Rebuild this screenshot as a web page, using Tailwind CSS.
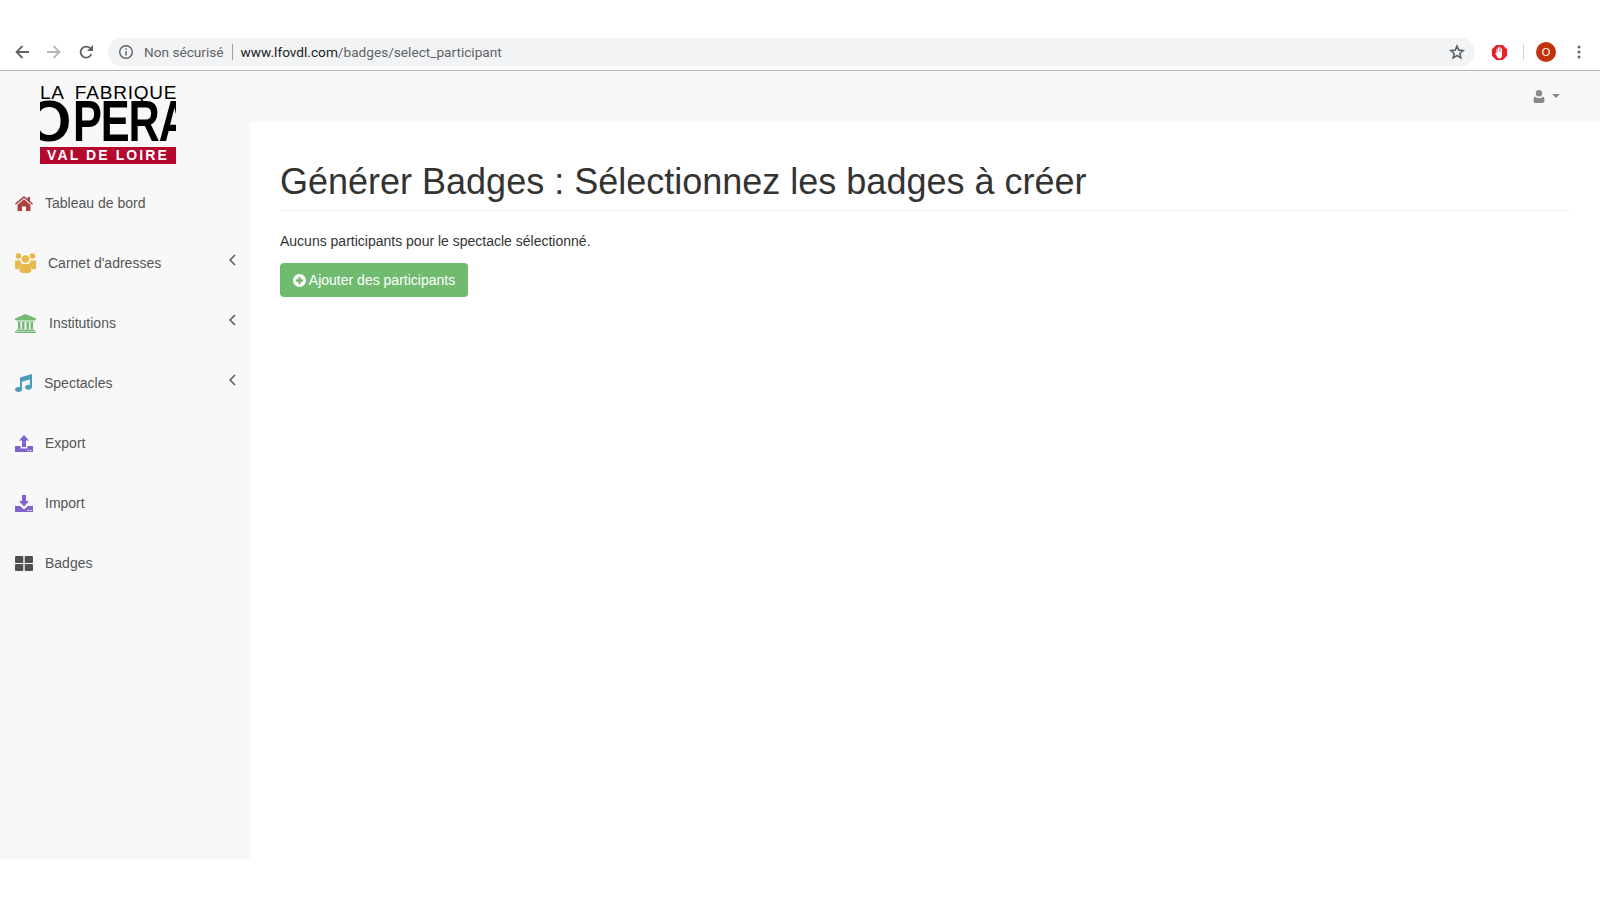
<!DOCTYPE html>
<html lang="fr">
<head>
<meta charset="utf-8">
<title>Générer Badges</title>
<script src="https://cdn.jsdelivr.net/npm/@tailwindcss/browser@4"></script>
</head>
<body class="bg-white font-['Liberation_Sans',Arial,sans-serif] w-[1600px] h-[900px] overflow-hidden">
<header class="h-[71px] border-b border-[#b8b8b8] bg-white flex items-end pb-[4px]">
  <div class="w-[108px] h-[28px] flex items-center pl-[15px] gap-[18px]">
    <svg class="w-[14px] h-[14px]" viewBox="0 0 14 14" fill="none" stroke="#5f6368" stroke-width="1.800"><path d="M14 7H1.500M7.500 1 1.500 7l6 6"/></svg>
    <svg class="w-[14px] h-[14px]" viewBox="0 0 14 14" fill="none" stroke="#b5b7ba" stroke-width="1.800"><path d="M0 7h12.500M6.500 1l6 6-6 6"/></svg>
    <svg class="w-[14px] h-[14px]" viewBox="0 0 14 14" fill="none" stroke="#5f6368" stroke-width="1.800"><path d="M12.300 9A5.500 5.500 0 1 1 11 3.200"/><path d="M14 0v6H8z" fill="#5f6368" stroke="none"/></svg>
  </div>
  <div class="w-[1367px] h-[28px] rounded-full bg-[#f1f3f4] flex items-center pl-[10px] pr-[10px] text-[13.650px] text-[#5f6368] font-['Roboto','Liberation_Sans',sans-serif]">
    <svg class="w-[16px] h-[16px] mr-[10px]" viewBox="0 0 16 16" fill="none" stroke="#5f6368" stroke-width="1.400"><circle cx="8" cy="8" r="6.300"/><path d="M8 7v4.500M8 4.300v1.500"/></svg>
    <span>Non sécurisé</span>
    <span class="w-px h-[16px] bg-[#9aa0a6] mx-[8px]"></span>
    <span><span class="text-[#202124]">www.lfovdl.com</span>/badges/select_participant</span>
    <svg class="w-[16px] h-[16px] ml-auto" viewBox="0 0 18 18" fill="none" stroke="#5f6368" stroke-width="1.800"><path d="m9 2.300 2 4.600 5 .5-3.800 3.300 1.100 4.900L9 13l-4.300 2.600 1.100-4.900L2 7.400l5-.5z"/></svg>
  </div>
  <div class="flex-1 h-[28px] flex items-center relative">
    <svg class="w-[17px] h-[17px] ml-[16px]" viewBox="0 0 18 18"><path d="M5.500 1h7L17 5.500v7L12.500 17h-7L1 12.500v-7z" fill="#e8202a"/><path d="M5.800 9V5h1.100v3.500h.5V3.500h1.200v5h.4V3.300h1.200v5.200h.4V4.800h1.100V12c0 2.200-1 3.300-2.700 3.300-1.500 0-2.300-.8-2.800-2.200L4.500 9.800z" fill="#fff"/></svg>
    <span class="w-px h-[16px] bg-[#d3d5d7] ml-[15px]"></span>
    <span class="w-[20px] h-[20px] rounded-full bg-[#c1330c] text-white text-[11px] flex items-center justify-center ml-[12px]">O</span>
    <svg class="w-[4px] h-[14px] ml-[21px]" viewBox="0 0 4 14" fill="#5f6368"><circle cx="2" cy="2" r="1.500"/><circle cx="2" cy="7" r="1.500"/><circle cx="2" cy="12" r="1.500"/></svg>
  </div>
</header>
<div class="flex h-[788px] bg-[#f8f8f8]">
  <aside class="w-[250px] shrink-0 bg-[#f8f8f8]">
    <div class="h-[102px] pl-[40px] pt-[15px]">
      <div class="w-[136px] h-[78px] overflow-hidden relative text-black">
        <div class="absolute left-[-13px] top-[9px] whitespace-nowrap text-[57px] leading-[52px] font-bold"><span class="inline-block">O</span><span class="inline-block ml-[2px] tracking-[-1.500px] origin-left scale-x-[0.76]">PERA</span></div>
        <div class="absolute left-0 top-[-4px] whitespace-nowrap text-[19px] leading-[22px] tracking-[0.800px] [word-spacing:5px]">LA FABRIQUE</div>
        <div class="absolute left-0 right-0 bottom-0 h-[17px] bg-[#b5082e] text-white text-[14px] font-bold tracking-[2.100px] leading-[17px] text-center">VAL DE LOIRE</div>
      </div>
    </div>
    <nav class="text-[14px] text-[#555555]">
      <a class="h-[60px] flex items-center pl-[15px]">
        <svg class="w-[18px] h-[15px] mr-[12px]" viewBox="0 0 18 15"><path d="M9 0 0 7.500l1 1.200L9 2l8 6.700 1-1.200-3-2.500V1h-2.500v2z" fill="#a94442"/><path d="M9 3.300 2.500 8.800V15h4.500v-4.500h4V15h4.500V8.800z" fill="#a94442"/></svg>
        <span>Tableau de bord</span>
      </a>
      <a class="h-[60px] flex items-center pl-[15px] relative">
        <svg class="w-[21px] h-[20px] mr-[12px]" viewBox="0 0 21 20" fill="#e5b94b"><circle cx="3.500" cy="3" r="2.800"/><circle cx="17.500" cy="3" r="2.800"/><circle cx="10.500" cy="6" r="3.800"/><path d="M0 7.500h5.300c.5 2 1.200 3 2.200 3.700-2 1-3.500 3-3.500 5H1.500C.5 16.200 0 15.500 0 14.500zM21 7.500h-5.300c-.5 2-1.200 3-2.200 3.700 2 1 3.500 3 3.500 5h2.500c1 0 1.500-.7 1.500-1.700z"/><path d="M7.500 11h6c2 1 3 2.500 3 5.500 0 2-1 3.500-3 3.500h-6c-2 0-3-1.500-3-3.500 0-3 1-4.500 3-5.500z"/></svg>
        <span>Carnet d'adresses</span>
        <svg class="absolute left-[229px] top-[21px] w-[7px] h-[12px]" viewBox="0 0 7 12" fill="none" stroke="#555" stroke-width="1.500"><path d="M6 1 1 6l5 5"/></svg>
      </a>
      <a class="h-[60px] flex items-center pl-[15px] relative">
        <svg class="w-[21px] h-[19px] mr-[13px]" viewBox="0 0 21 19" fill="#74b974"><path d="M10.500 0 21 4.500V6H0V4.500z"/><path d="M1.500 6.500h18v1h-18zM3 8h2.500v7H3zM7 8h2.500v7H7zM11.500 8H14v7h-2.500zM15.500 8H18v7h-2.500zM1.500 15.500h18V17h-18zM0 17.500h21V19H0z"/></svg>
        <span>Institutions</span>
        <svg class="absolute left-[229px] top-[21px] w-[7px] h-[12px]" viewBox="0 0 7 12" fill="none" stroke="#555" stroke-width="1.500"><path d="M6 1 1 6l5 5"/></svg>
      </a>
      <a class="h-[60px] flex items-center pl-[15px] relative">
        <svg class="w-[17px] h-[18px] mr-[12px]" viewBox="0 0 17 18" fill="#4b9cbb"><path d="M5 3.500 17 0v13c0 1.500-1.500 2.700-3.500 2.700S10 14.500 10 13.200s1.500-2.500 3.500-2.500c.5 0 1 .1 1.400.3V5.500L7 7.800V15.500c0 1.400-1.500 2.500-3.500 2.500S0 16.900 0 15.600s1.500-2.500 3.500-2.500c.6 0 1 .1 1.500.3z"/></svg>
        <span>Spectacles</span>
        <svg class="absolute left-[229px] top-[21px] w-[7px] h-[12px]" viewBox="0 0 7 12" fill="none" stroke="#555" stroke-width="1.500"><path d="M6 1 1 6l5 5"/></svg>
      </a>
      <a class="h-[60px] flex items-center pl-[15px]">
        <svg class="w-[18px] h-[17px] mr-[12px]" viewBox="0 0 18 17"><path d="M9 0l5 5.500h-3V12H7V5.500H4z" fill="#7f62cc"/><path d="M0 11h5.500v2.500h7V11H18v6H0z" fill="#7f62cc"/><path d="M12.500 15h1.500v1h-1.500zM15 15h1.500v1H15z" fill="#fff"/></svg>
        <span>Export</span>
      </a>
      <a class="h-[60px] flex items-center pl-[15px]">
        <svg class="w-[18px] h-[17px] mr-[12px]" viewBox="0 0 18 17"><path d="M7 0h4v6h3l-5 5.500L4 6h3z" fill="#7f62cc"/><path d="M0 11h5l4 3.500 4-3.500h5v6H0z" fill="#7f62cc"/><path d="M12.500 15h1.500v1h-1.500zM15 15h1.500v1H15z" fill="#fff"/></svg>
        <span>Import</span>
      </a>
      <a class="h-[60px] flex items-center pl-[15px]">
        <svg class="w-[18px] h-[15px] mr-[12px]" viewBox="0 0 18 15" fill="#4f4f4f"><rect width="8.300" height="7" rx="1"/><rect x="9.700" width="8.300" height="7" rx="1"/><rect y="8" width="8.300" height="7" rx="1"/><rect x="9.700" y="8" width="8.300" height="7" rx="1"/></svg>
        <span>Badges</span>
      </a>
    </nav>
  </aside>
  <div class="flex-1 flex flex-col">
    <div class="h-[51px] shrink-0 bg-[#f8f8f8] flex items-center justify-end pr-[40px] pb-[1px] gap-[7px]">
      <svg class="w-[12px] h-[13px]" viewBox="0 0 11 13" fill="#8a8a8a"><circle cx="5.500" cy="3.300" r="3.200"/><path d="M1.500 6.500c1 1 2.500 1.500 4 1.500s3-.5 4-1.500c1 .5 1.500 2 1.500 4.500 0 1.300-.8 2-2 2H2c-1.200 0-2-.7-2-2 0-2.500.5-4 1.500-4.500z"/></svg>
      <svg class="w-[8px] h-[4px]" viewBox="0 0 8 4" fill="#8a8a8a"><path d="M0 0h8L4 4z"/></svg>
    </div>
    <main class="flex-1 bg-white pl-[30px] pr-[30px] text-[#333333]">
      <h1 class="mt-[40px] pb-[8px] text-[36px] leading-[40px] border-b border-[#eeeeee] font-normal">Générer Badges : Sélectionnez les badges à créer</h1>
      <p class="mt-[20px] text-[14px] leading-[20px]">Aucuns participants pour le spectacle sélectionné.</p>
      <button class="mt-[12px] h-[34px] w-[188px] rounded-[4px] bg-[#71bb71] text-white text-[14px] flex items-center justify-center gap-[3px]">
        <svg class="w-[13px] h-[13px]" viewBox="0 0 13 13"><circle cx="6.500" cy="6.500" r="6.500" fill="#fff"/><path d="M5.300 3h2.400v2.300H10v2.400H7.700V10H5.300V7.700H3V5.300h2.300z" fill="#71bb71"/></svg>
        <span>Ajouter des participants</span>
      </button>
    </main>
  </div>
</div>
<div class="h-[41px] bg-white"></div>
</body>
</html>
